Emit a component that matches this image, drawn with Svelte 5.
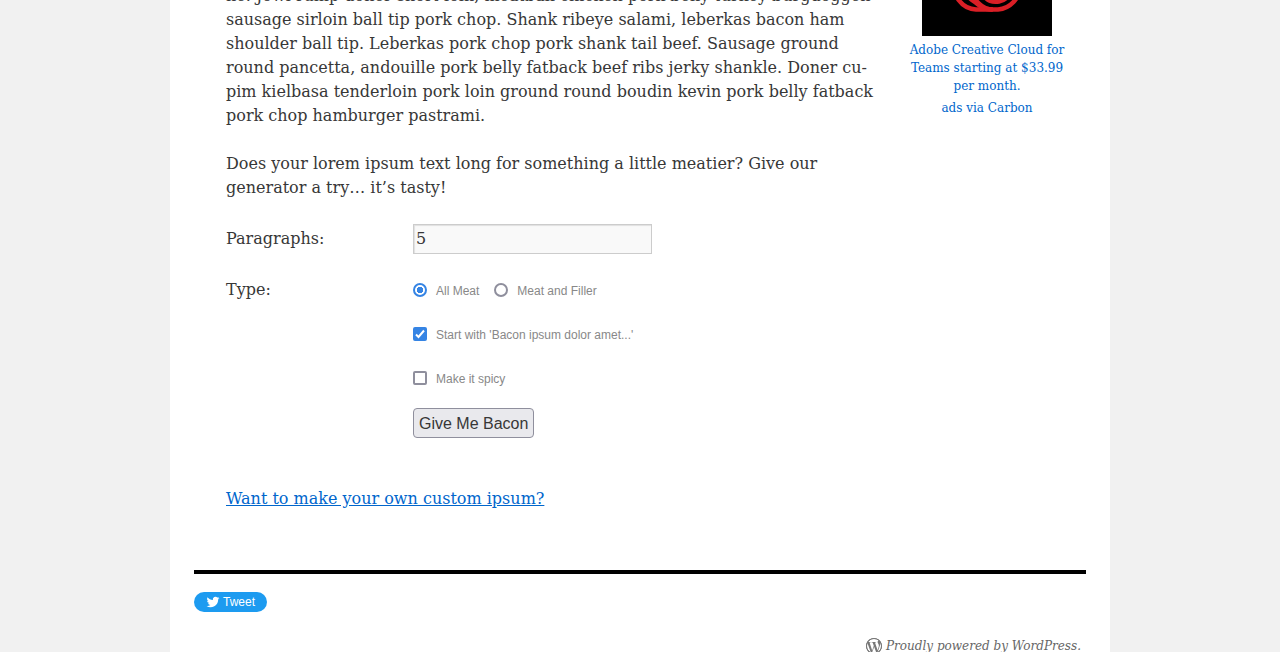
<script>
  let paragraphs = $state('5');
  let type = $state('all-meat');
  let startWithLorem = $state(true);
  let spicy = $state(false);

  const lines = [
    'ne. Jowl rump doner short loin, meatball chicken pork belly turkey burgdoggen',
    'sausage sirloin ball tip pork chop. Shank ribeye salami, leberkas bacon ham',
    'shoulder ball tip. Leberkas pork chop pork shank tail beef. Sausage ground',
    'round pancetta, andouille pork belly fatback beef ribs jerky shankle. Doner cu-',
    'pim kielbasa tenderloin pork loin ground round boudin kevin pork belly fatback',
    'pork chop hamburger pastrami.'
  ];
</script>

<div class="page">
  <div class="main">
    <main>
      <p>{#each lines as line, i}{#if i}<br />{/if}{line}{/each}</p>
      <p>Does your lorem ipsum text long for something a little meatier? Give our<br />generator a try… it’s tasty!</p>

      <form onsubmit={(e) => e.preventDefault()}>
        <label class="name" for="paras">Paragraphs:</label>
        <div class="field"><input id="paras" class="text" type="text" bind:value={paragraphs} /></div>

        <span class="name" id="type-name">Type:</span>
        <div class="field choices" role="radiogroup" aria-labelledby="type-name">
          <label><input type="radio" name="type" value="all-meat" bind:group={type} />All Meat</label>
          <label><input type="radio" name="type" value="meat-and-filler" bind:group={type} />Meat and Filler</label>
        </div>

        <div class="field choices">
          <label><input type="checkbox" bind:checked={startWithLorem} />Start with 'Bacon ipsum dolor amet...'</label>
        </div>
        <div class="field choices">
          <label><input type="checkbox" bind:checked={spicy} />Make it spicy</label>
        </div>
        <div class="field"><button type="submit">Give Me Bacon</button></div>
      </form>

      <p><a class="custom" href="#custom">Want to make your own custom ipsum?</a></p>
    </main>

    <aside>
      <a class="ad" href="#ad" aria-label="Adobe Creative Cloud">
        <svg width="130" height="100" viewBox="0 0 130 100">
          <rect width="130" height="100" fill="#000" />
          <g fill="none" stroke="#da1f26" stroke-width="4.500">
            <path d="M54 73.500A23 23 0 0 1 33 45A23 23 0 0 1 54 30C70 18 98 26 98 50A24 24 0 0 1 76 73.500Z" />
            <path d="M42 52C43 59 48 63 53 66C59 71 62 73.500 70 73.500" />
            <path d="M47 58L57 67.500Q63 73.500 71 73.500" />
            <path d="M60 56C64 66 72 66.500 77 65.500C85 64 88 58 88 50" />
          </g>
        </svg>
      </a>
      <a class="copy" href="#ad">Adobe Creative Cloud for Teams starting at $33.99 per month.</a>
      <a class="via" href="#carbon">ads via Carbon</a>
    </aside>
  </div>

  <footer>
    <a class="tweet" href="#tweet">
      <svg width="14" height="14" viewBox="-1 -1 26 26" aria-hidden="true">
        <path fill="#fff" d="M23.950 4.570a10 10 0 0 1-2.820.770 4.960 4.960 0 0 0 2.160-2.720c-.950.550-2 .960-3.130 1.180a4.920 4.920 0 0 0-8.380 4.480C7.690 8.090 4.070 6.130 1.640 3.160a4.920 4.920 0 0 0 1.520 6.570 4.900 4.900 0 0 1-2.230-.610v.060a4.920 4.920 0 0 0 3.950 4.830 5 5 0 0 1-2.210.080 4.940 4.940 0 0 0 4.600 3.420A9.870 9.870 0 0 1 0 19.540a13.990 13.990 0 0 0 7.550 2.210c9.050 0 14-7.500 14-13.980 0-.210 0-.420-.020-.630a9.940 9.940 0 0 0 2.460-2.550z" />
      </svg>
      Tweet
    </a>
    <a class="powered" href="#wordpress">
      <svg width="16" height="16" viewBox="0 0 24 24" aria-hidden="true">
        <path fill="#777" d="M21.469 6.825c.840 1.537 1.318 3.300 1.318 5.175 0 3.979-2.156 7.456-5.363 9.325l3.295-9.527c.615-1.540.820-2.771.820-3.864 0-.405-.026-.780-.070-1.110m-7.981.105c.647-.030 1.232-.105 1.232-.105.582-.075.514-.930-.067-.899 0 0-1.755.135-2.880.135-1.064 0-2.850-.150-2.850-.150-.585-.030-.661.855-.075.885 0 0 .540.061 1.125.090l1.680 4.605-2.370 7.080L5.354 6.900c.649-.030 1.234-.100 1.234-.100.585-.075.516-.930-.065-.896 0 0-1.746.138-2.874.138-.200 0-.438-.008-.690-.015C4.911 3.150 8.235 1.215 12 1.215c2.809 0 5.365 1.072 7.286 2.833-.046-.003-.091-.009-.141-.009-1.060 0-1.812.923-1.812 1.914 0 .890.513 1.643 1.060 2.531.411.720.890 1.643.890 2.977 0 .915-.354 1.994-.821 3.479l-1.075 3.585-3.900-11.610zM12 22.784c-1.059 0-2.081-.153-3.048-.437l3.237-9.406 3.315 9.087c.024.053.050.101.078.149-1.120.393-2.325.609-3.582.609M1.211 12c0-1.564.336-3.050.935-4.390L7.290 21.709C3.694 19.960 1.212 16.271 1.211 12M12 0C5.385 0 0 5.385 0 12s5.385 12 12 12 12-5.385 12-12S18.615 0 12 0" />
        <circle cx="12" cy="12" r="11.250" fill="none" stroke="#777" stroke-width="1.500" />
      </svg>
      Proudly powered by WordPress.
    </a>
  </footer>
</div>

<style>
  :global(body) {
    background: #f1f1f1;
    overflow: hidden;
  }
  .page {
    box-sizing: border-box;
    max-width: 940px;
    margin: 0 auto;
    padding: 0 24px;
    background: #fff;
    color: #373737;
    font: 16px/24px "DejaVu Serif", serif;
    overflow: hidden;
  }
  .main {
    display: flex;
    justify-content: space-between;
    align-items: flex-start;
    margin-top: -16px;
    padding: 0 20px 59px 32px;
    border-bottom: 4px solid #000;
  }
  main {
    white-space: nowrap;
  }
  p {
    margin: 0 0 24px;
  }
  main p:last-child {
    margin: 0;
  }
  a {
    color: #0066cc;
  }
  form {
    display: grid;
    grid-template-columns: 187px 1fr;
    margin-bottom: 49px;
  }
  .name {
    grid-column: 1;
    line-height: 30px;
  }
  .field {
    grid-column: 2;
    display: flex;
    min-height: 30px;
  }
  .text {
    box-sizing: border-box;
    width: 239px;
    height: 30px;
    margin-bottom: 21px;
    padding: 0 2px 2px;
    border: 1px solid #ccc;
    background: #f9f9f9;
    box-shadow: inset 1px 1px 1px rgba(0, 0, 0, 0.1);
    color: #373737;
    font: inherit;
  }
  .choices {
    gap: 15px;
    align-items: flex-start;
    min-height: 44px;
    color: #888;
    font: 12px/32px "Liberation Sans", Arial, sans-serif;
  }
  .choices label {
    display: flex;
    align-items: center;
    gap: 9px;
  }
  .choices input {
    appearance: none;
    box-sizing: border-box;
    width: 14px;
    height: 14px;
    margin: 0 0 2px;
    border: 2px solid #8f8f9d;
    border-radius: 2px;
    background: #fff;
  }
  .choices input[type='radio'] {
    border-radius: 50%;
  }
  .choices input[type='radio']:checked {
    border-color: #3584e4;
    background: radial-gradient(circle, #3584e4 2px, #3584e4 3px, #fff 3px);
  }
  .choices input[type='checkbox']:checked {
    border-color: #3584e4;
    background: #3584e4 url("data:image/svg+xml,%3Csvg xmlns='http://www.w3.org/2000/svg' viewBox='0 0 10 10'%3E%3Cpath d='M1 5.500L3.500 8L9 1.500' fill='none' stroke='white' stroke-width='2'/%3E%3C/svg%3E") center / 10px 10px no-repeat;
  }
  button {
    height: 30px;
    margin-top: 1px;
    padding: 1px 5px 0;
    border: 1px solid #8f8f9d;
    border-radius: 4px;
    background: #e9e9ed;
    color: #373737;
    font: 16px/28px "Liberation Sans", Arial, sans-serif;
  }
  aside {
    width: 158px;
    display: flex;
    flex-direction: column;
    align-items: center;
    margin-top: -48px;
    font-size: 12px;
    line-height: 18px;
    text-align: center;
  }
  aside a {
    text-decoration: none;
  }
  .ad svg {
    display: block;
  }
  .copy {
    margin: 5px 0 4px;
  }
  footer {
    padding-top: 18px;
    display: flex;
    flex-direction: column;
    align-items: flex-start;
    gap: 24px;
  }
  .tweet {
    display: flex;
    align-items: center;
    gap: 3px;
    padding: 0 12px;
    border-radius: 10px;
    background: #1d9bf0;
    color: #fff;
    font: 12px/20px "Liberation Sans", Arial, sans-serif;
    text-decoration: none;
  }
  .powered {
    align-self: flex-end;
    display: flex;
    align-items: center;
    gap: 4px;
    padding-right: 5px;
    color: #666;
    font-size: 12px;
    font-style: italic;
    line-height: 20px;
    text-decoration: none;
  }
</style>
